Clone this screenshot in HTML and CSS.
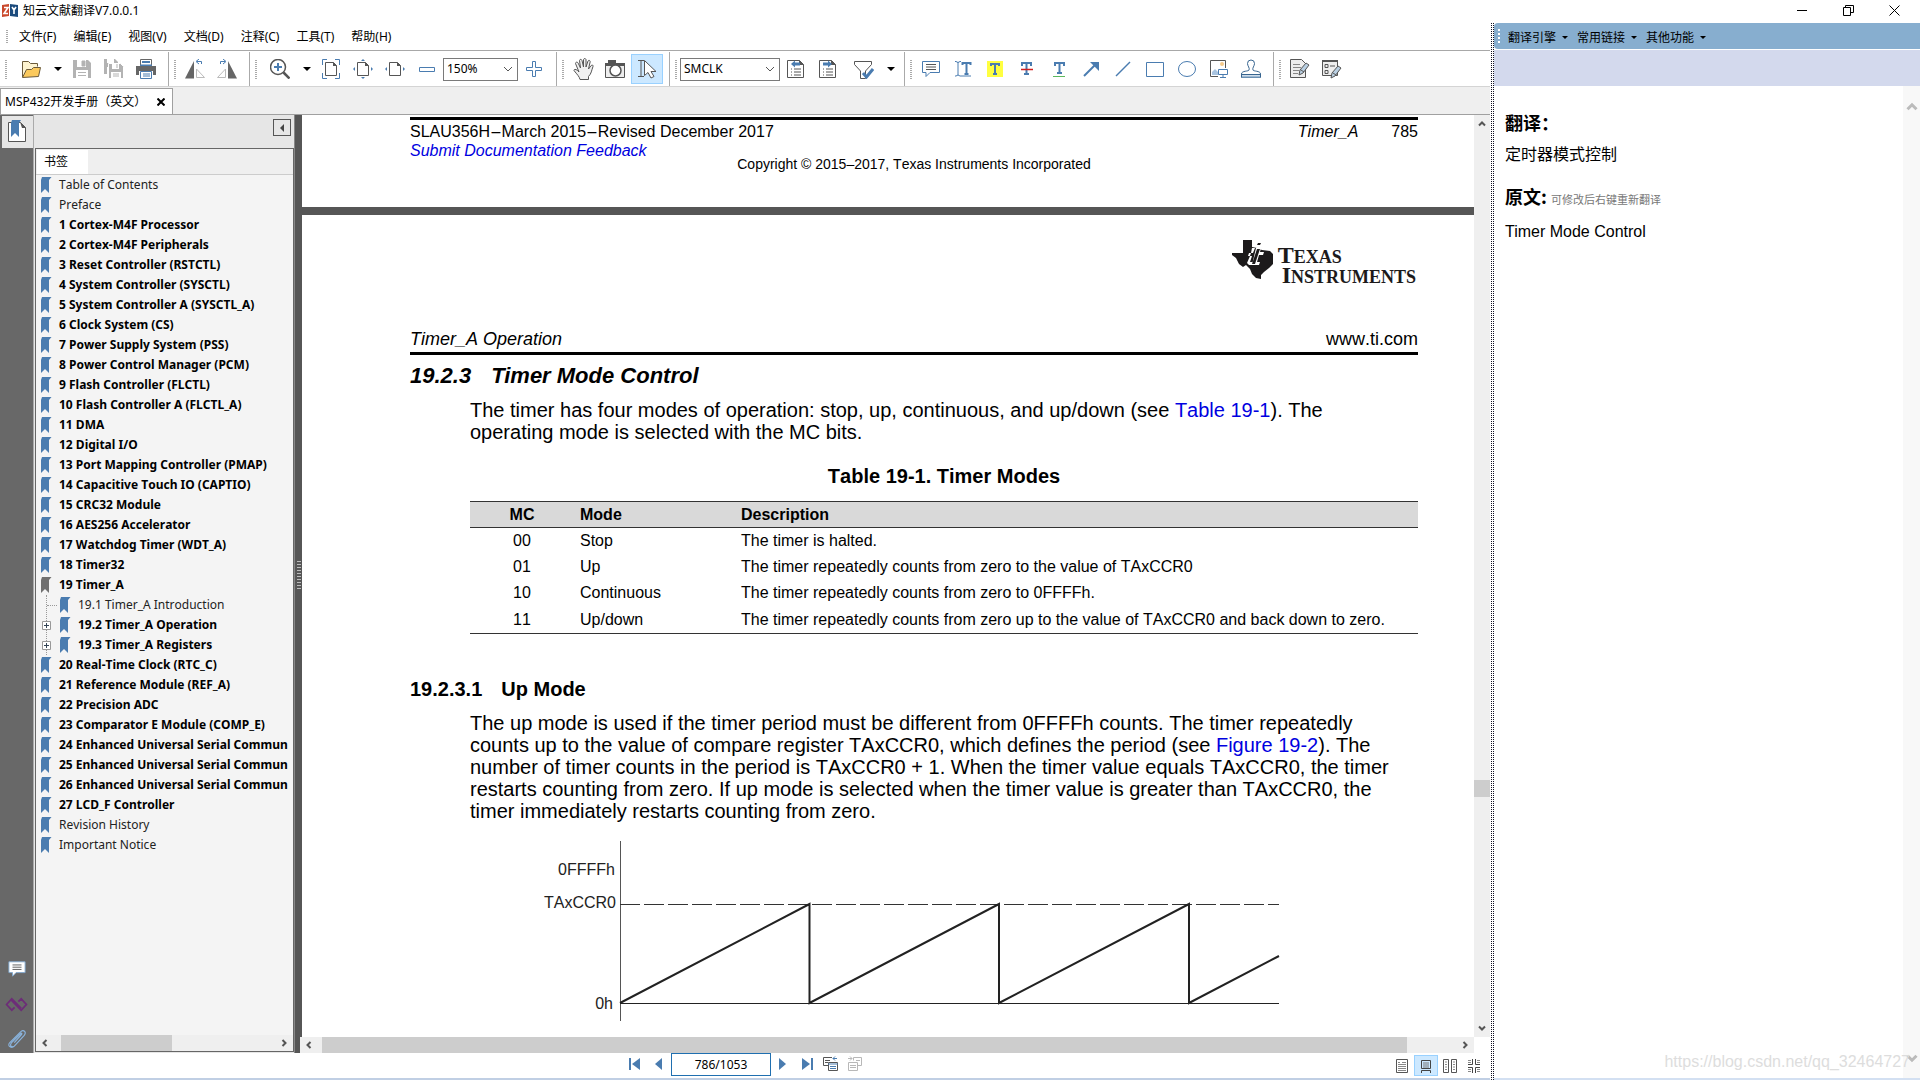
FILE: index.html
```html
<!DOCTYPE html>
<html lang="zh-CN">
<head>
<meta charset="utf-8">
<title>知云文献翻译V7.0.0.1</title>
<link rel="stylesheet" href="styles.css">
</head>
<body>
<svg class="defs" aria-hidden="true">
  <symbol id="mark" viewBox="0 0 12 16"><path d="M2 0h9.500l-2.500 3v13l-4-4-4 4V3z" fill="currentColor"/></symbol>
  <symbol id="down" viewBox="0 0 8 4"><path d="M0 0h8L4 4z" fill="currentColor"/></symbol>
  <symbol id="chev" viewBox="0 0 10 6"><path d="M1 1l4 4 4-4" fill="none" stroke="currentColor"/></symbol>
  <symbol id="sc" viewBox="0 0 8 8"><path d="M5.500 1l-3 3 3 3" fill="none" stroke="currentColor" stroke-width="2"/></symbol>
  <symbol id="page" viewBox="0 0 20 20"><path d="M4.500 3.500h8l3 3v10h-11z" fill="#fff" stroke="#555"/><path d="M12 3l4 4h-4z" fill="#555"/></symbol>
  <symbol id="lines" viewBox="0 0 20 20"><path d="M1.500 1.500h12l4 4v13h-16z" fill="#fff" stroke="#555"/><path d="M13 1l5 5h-5z" fill="#555"/><path d="M5 10h1m2 0h7M5 13h1m2 0h7M5 16h1m2 0h7" stroke="#555"/></symbol>
  <symbol id="pen" viewBox="0 0 12 14"><path d="M1 13l1-5 6-7 3 2-6 8z" fill="#b9cfe2" stroke="#555"/><path d="M3 8l3 2" stroke="#555"/></symbol>
</svg>
<div class="app">
  <header class="titlebar">
    <svg class="logo" viewBox="0 0 16 13"><path d="M0 1l7-1v12l-7 1z" fill="#c9482c"/><path d="M8 0l8 1v12l-8-1z" fill="#1b4a7c"/><path d="M2 3.500h4l-4 6h4M10 3l2 3 2-3M12 6v4" fill="none" stroke="#fff" stroke-width="1.600"/></svg>
    <h1 class="apptitle">知云文献翻译V7.0.0.1</h1>
    <button class="winbtn" aria-label="最小化"><svg viewBox="0 0 11 11"><path d="M0 5.500h10" stroke="#000"/></svg></button>
    <button class="winbtn" aria-label="还原"><svg viewBox="0 0 11 11"><path d="M.5 2.500h7v8h-7zM2.500 2.500v-2h8v7h-3" fill="none" stroke="#000"/></svg></button>
    <button class="winbtn" aria-label="关闭"><svg viewBox="0 0 11 11"><path d="M.5.5l10 10M10.500.5l-10 10" stroke="#000"/></svg></button>
  </header>
  <div class="body">
    <main class="reader">
      <nav class="menubar">
        <button>文件(F)</button><button>编辑(E)</button><button>视图(V)</button><button>文档(D)</button><button>注释(C)</button><button>工具(T)</button><button>帮助(H)</button>
      </nav>
      <div class="toolbar">
        <div class="group wide">
          <button class="tool" aria-label="打开"><svg viewBox="0 0 20 20"><path d="M1.500 18V2.500h6l2 2h7v3" fill="#fdf3d0" stroke="#6b5a3a"/><path d="M1.500 18.500l4-8h5l2-2h7l-2 9z" fill="#fbc95c" stroke="#6b5a3a"/></svg></button>
          <button class="drop" aria-label="最近文件"><svg viewBox="0 0 8 4"><use href="#down"/></svg></button>
          <button class="tool" aria-label="保存"><svg viewBox="0 0 20 20"><path d="M1 1h15l3 3v15H1z" fill="#b3b3b3"/><path d="M5 1h9v7H5zM4 11h12v8H4z" fill="#fff"/><path d="M10 2h3v5h-3zM6 13.500h8M6 16.500h8" fill="#b3b3b3" stroke="#b3b3b3"/></svg></button>
          <button class="tool" aria-label="全部保存"><svg viewBox="0 0 20 20"><path d="M0 0h11l3 3v12H0z" fill="#b3b3b3"/><path d="M3 0h7v4H3zM3 8h2v7H3z" fill="#fff"/><path d="M4.500 4.500h12l3 3v12h-15z" fill="#b3b3b3" stroke="#fff"/><path d="M8 5h7v5H8zM7 13h10v6H7z" fill="#fff"/><path d="M13 5v4M9 15h6M9 17h6" stroke="#b3b3b3"/></svg></button>
          <button class="tool" aria-label="打印"><svg viewBox="0 0 20 20"><path d="M4.500 6V.5h11V6" fill="#fff" stroke="#666"/><path d="M6 3h8M4 6.500h12" stroke="#4a7cb0" stroke-width="2"/><path d="M0 7h20v9h-3v-4H3v4H0z" fill="#666"/><path d="M4.500 12.500h11v7h-11z" fill="#fff" stroke="#4a7cb0"/><path d="M7 15h7M7 17h7" stroke="#4a7cb0"/></svg></button>
        </div>
        <div class="group">
          <button class="tool" aria-label="向左旋转"><svg viewBox="0 0 20 20"><path d="M9 2v17.500H0z" fill="#666"/><path d="M11.500 10v8.500h8z" fill="none" stroke="#bbb"/><path d="M16.500 5V2.500H12M14 0l-3 2.500L14 5" fill="none" stroke="#4a7cb0"/></svg></button>
          <button class="tool" aria-label="向右旋转"><svg viewBox="0 0 20 20"><path d="M11 2v17.500h9z" fill="#666"/><path d="M8.500 10v8.500h-8z" fill="none" stroke="#bbb"/><path d="M3.500 5V2.500H8M6 0l3 2.500L6 5" fill="none" stroke="#4a7cb0"/></svg></button>
        </div>
        <div class="group wide">
          <button class="tool" aria-label="放大工具"><svg viewBox="0 0 20 20"><circle cx="8" cy="8" r="7.500" fill="#fff" stroke="#555" stroke-width="1.500"/><path d="M8 4v8M4 8h8" stroke="#4a7cb0" stroke-width="2"/><path d="M13.500 13.500l6 6" stroke="#555" stroke-width="2.500"/></svg></button>
          <button class="drop" aria-label="缩放选项"><svg viewBox="0 0 8 4"><use href="#down"/></svg></button>
          <button class="tool" aria-label="实际大小"><svg viewBox="0 0 20 20"><use href="#page"/><path d="M1.500 6V.5H6M14 .5h4.500V6M1.500 14v5.500H6M14 19.500h4.500V14" fill="none" stroke="#4a7cb0"/></svg></button>
          <button class="tool" aria-label="适合页面"><svg viewBox="0 0 20 20"><use href="#page"/><path d="M10 0l2 2H8zM10 20l2-2H8zM0 10l2-2v4zM20 10l-2-2v4z" fill="#4a7cb0"/></svg></button>
          <button class="tool" aria-label="适合宽度"><svg viewBox="0 0 20 20"><use href="#page"/><path d="M0 10l2-2v4zM20 10l-2-2v4z" fill="#4a7cb0"/></svg></button>
          <button class="tool" aria-label="缩小"><svg viewBox="0 0 20 20"><path d="M2.500 8.500h15v4h-15z" fill="#fff" stroke="#4a7cb0"/></svg></button>
          <div class="combo zoomcombo"><select aria-label="缩放比例"><option>150%</option></select><svg viewBox="0 0 10 6"><use href="#chev"/></svg></div>
          <button class="tool" aria-label="放大"><svg viewBox="0 0 20 20"><path d="M8.500 2.500h3v6h6v3h-6v6h-3v-6h-6v-3h6z" fill="#fff" stroke="#4a7cb0"/></svg></button>
        </div>
        <div class="group">
          <button class="tool" aria-label="手形工具"><svg class="hand" viewBox="0 0 21 22"><path d="M7 21.500c-.5-3-3-5-6-9 0-1.500 2-2 5 1.500L2.500 5.500c0-1.500 2-2 2.700-.3L7.500 10 6.500 2.500c.3-1.500 2-1.500 2.500 0L10.500 9V1.500c.5-1.300 2-1.300 2.500 0V9l2-6c.7-1.200 2.200-.7 2.200.7L15.500 11l2.700-3.500c1-1 2.300-.2 1.800 1-1.500 4-1.500 7-4.500 10v3z" fill="#f0f0f0" stroke="#555"/></svg></button>
          <button class="tool" aria-label="快照"><svg viewBox="0 0 20 20"><path d="M.5 4.500h19v14H.5z" fill="#eee" stroke="#555"/><path d="M0 4h20v3H0zM3 1h8v3H3z" fill="#555"/><circle cx="10.500" cy="11.500" r="5.500" fill="#fff" stroke="#555" stroke-width="1.500"/></svg></button>
          <button class="tool selected" aria-label="选择工具" aria-pressed="true"><svg viewBox="0 0 20 20"><path d="M1 1.500h6M4 2v15M1 17.500h6" stroke="#555" fill="none"/><path d="M7.500 1.500v15l3.500-3 3 5.500 3-1.500-3-5h5z" fill="#fff" stroke="#555"/></svg></button>
        </div>
        <div class="group">
          <div class="combo findcombo"><select aria-label="查找"><option>SMCLK</option></select><svg viewBox="0 0 10 6"><use href="#chev"/></svg></div>
          <button class="tool" aria-label="查找上一个"><svg viewBox="0 0 20 20"><use href="#lines"/><path d="M14 5H8" stroke="#4a7cb0" stroke-width="3"/><path d="M9 1.500v7L5 5z" fill="#4a7cb0"/></svg></button>
          <button class="tool" aria-label="查找下一个"><svg viewBox="0 0 20 20"><use href="#lines"/><path d="M5 5h6" stroke="#4a7cb0" stroke-width="3"/><path d="M10 1.500v7L14 5z" fill="#4a7cb0"/></svg></button>
          <button class="tool filter" aria-label="查找选项"><svg viewBox="0 0 20 20"><path d="M.5 2.500h17v3L11.500 12v7.500h-5V12L.5 5.500z" fill="#fff" stroke="#555"/><path d="M9 14l3.500 4L19 10" fill="none" stroke="#4a7cb0" stroke-width="3"/></svg></button>
          <button class="drop" aria-label="更多查找选项"><svg viewBox="0 0 8 4"><use href="#down"/></svg></button>
        </div>
        <div class="group">
          <button class="tool" aria-label="注释"><svg viewBox="0 0 20 20"><path d="M1.500 2.500h17v11H9l-4 4v-4H1.500z" fill="#fff" stroke="#4a7cb0"/><path d="M5 5.500h10M5 8h10M5 10.500h10" stroke="#555"/></svg></button>
          <button class="tool" aria-label="文本编辑"><svg viewBox="0 0 20 20"><path d="M2 2.500h1l2 1 2-1h1M5 3v13M2 17h1l2-1 2 1h11" fill="none" stroke="#4a7cb0"/><path d="M9.500 6V4h8v2M13.500 4v11M11.500 15h4" fill="none" stroke="#4a7cb0" stroke-width="2"/></svg></button>
          <button class="tool" aria-label="高亮"><svg viewBox="0 0 20 20"><path d="M2 2h16v16H2z" fill="#ffff40"/><path d="M6 7V5h8v2M10 5v10M8 15h4" fill="none" stroke="#4a7cb0" stroke-width="2"/></svg></button>
          <button class="tool" aria-label="删除线"><svg viewBox="0 0 20 20"><path d="M5 7V4h9v3M9.500 4v11M7 15h5" fill="none" stroke="#4a7cb0" stroke-width="2"/><path d="M4 10.500h12" stroke="#d02020" stroke-width="1.500"/></svg></button>
          <button class="tool" aria-label="下划线"><svg viewBox="0 0 20 20"><path d="M6 7V4h9v3M10.500 4v10M8 14h5" fill="none" stroke="#4a7cb0" stroke-width="2"/><path d="M4 17.500h12" stroke="#5cb85c"/></svg></button>
          <button class="tool" aria-label="箭头"><svg viewBox="0 0 20 20"><path d="M3 17L14 6" stroke="#4a7cb0" stroke-width="2"/><path d="M9 3h9v9z" fill="#4a7cb0"/></svg></button>
          <button class="tool" aria-label="直线"><svg viewBox="0 0 20 20"><path d="M3 17L17 3" stroke="#4a7cb0" stroke-width="1.500"/></svg></button>
          <button class="tool" aria-label="矩形"><svg viewBox="0 0 20 20"><path d="M1.500 3.500h17v14h-17z" fill="none" stroke="#4a7cb0"/></svg></button>
          <button class="tool" aria-label="椭圆"><svg viewBox="0 0 20 20"><ellipse cx="10" cy="10" rx="8.500" ry="7.500" fill="none" stroke="#4a7cb0"/></svg></button>
          <button class="tool" aria-label="图片"><svg viewBox="0 0 20 20"><path d="M9 17.500H1.500v-16h15V9" fill="none" stroke="#555"/><circle cx="13" cy="5" r="2" fill="#f5c98a"/><path d="M3 16v-3l3-3 3 3v3z" fill="#a9c4e0"/><path d="M9.500 10.500h9v5h-9zM14 16v2.500M11 18.500h6" fill="#fff" stroke="#4a7cb0"/></svg></button>
          <button class="tool" aria-label="图章"><svg viewBox="0 0 20 20"><path d="M8 11c1-2-1.500-4-1.500-6.500a3.500 3.500 0 0 1 7 0C13.500 7 11 9 12 11c0 1.500 7.500.5 7.500 4v3.500H.5V15C.5 11.500 8 12.500 8 11z" fill="#fff" stroke="#36648f"/><path d="M1 15.500h18" stroke="#36648f"/><path d="M1 17.500h18" stroke="#9db9d3" stroke-width="2"/></svg></button>
        </div>
        <div class="group last">
          <button class="tool" aria-label="编辑内容"><svg viewBox="0 0 20 20"><path d="M.5.5h11l4 4v14H.5z" fill="#eee" stroke="#555"/><path d="M3 5.500h7M3 8.500h8M3 11.500h6M3 14.500h5" stroke="#888"/><use href="#pen" x="8" y="3" width="12" height="14"/></svg></button>
          <button class="tool" aria-label="编辑表单"><svg viewBox="0 0 20 20"><path d="M.5 1.500h15v15H.5z" fill="#eee" stroke="#555"/><path d="M0 1h16v2H0z" fill="#555"/><path d="M3 5.500h3v3H3zM3 11.500h3v3H3zM8 7h5" fill="none" stroke="#555"/><use href="#pen" x="8" y="6" width="12" height="14"/></svg></button>
        </div>
      </div>
      <div class="tabs">
        <div class="tab"><span>MSP432开发手册（英文）</span><button aria-label="关闭标签"><svg viewBox="0 0 8 8"><path d="M.5.5l7 7M7.500.5l-7 7" stroke="#000" stroke-width="2"/></svg></button></div>
      </div>
      <div class="work">
        <div class="rail">
          <button class="railtab" aria-label="书签面板"><svg viewBox="0 0 20 22"><path d="M1.500 2.500h12l5 5v14h-17z" fill="#fff" stroke="#555"/><path d="M13 2l6 6h-4z" fill="#555"/><path d="M5 0h9l-2 3v14l-4-4-4 4V3z" fill="#4a7cb0"/></svg></button>
          <button class="railbtn" aria-label="注释面板"><svg viewBox="0 0 20 18"><path d="M1 1h18v12H9l-4 4v-4H1z" fill="#fff" stroke="#7fa8d0"/><path d="M5 4.500h10M5 7h10M5 9.500h10" stroke="#555"/></svg></button>
          <button class="railbtn" aria-label="链接面板"><svg class="link" viewBox="0 0 24 18"><path d="M14 12L7 5M10 6L7 3l-5.500 6L7 15l3-3M10 6l7 7M14 12l3 3 5.500-6L17 3l-3 3" fill="none" stroke="#6d2c78" stroke-width="1.800"/></svg></button>
          <button class="railbtn" aria-label="附件面板"><svg viewBox="0 0 20 20"><path d="M7 14l8-9c1-1 0-2-1-1L4 14c-3 4 1 6 3 4L18 6c3-4-1-7-4-4L2 14c-3 3 1 7 4 4" fill="none" stroke="#8ab4de" stroke-width="1.300"/></svg></button>
        </div>
        <aside class="panel">
          <div class="panelhead"><button aria-label="收起面板"><svg viewBox="0 0 4 8"><path d="M4 0v8L0 4z" fill="#444"/></svg></button></div>
          <div class="panelbox">
            <div class="paneltabs"><button>书签</button></div>
            <ul class="tree">
              <li><a href="#"><svg><use href="#mark"/></svg>Table of Contents</a></li>
              <li><a href="#"><svg><use href="#mark"/></svg>Preface</a></li>
              <li><a class="b" href="#"><svg><use href="#mark"/></svg>1 Cortex-M4F Processor</a></li>
              <li><a class="b" href="#"><svg><use href="#mark"/></svg>2 Cortex-M4F Peripherals</a></li>
              <li><a class="b" href="#"><svg><use href="#mark"/></svg>3 Reset Controller (RSTCTL)</a></li>
              <li><a class="b" href="#"><svg><use href="#mark"/></svg>4 System Controller (SYSCTL)</a></li>
              <li><a class="b" href="#"><svg><use href="#mark"/></svg>5 System Controller A (SYSCTL_A)</a></li>
              <li><a class="b" href="#"><svg><use href="#mark"/></svg>6 Clock System (CS)</a></li>
              <li><a class="b" href="#"><svg><use href="#mark"/></svg>7 Power Supply System (PSS)</a></li>
              <li><a class="b" href="#"><svg><use href="#mark"/></svg>8 Power Control Manager (PCM)</a></li>
              <li><a class="b" href="#"><svg><use href="#mark"/></svg>9 Flash Controller (FLCTL)</a></li>
              <li><a class="b" href="#"><svg><use href="#mark"/></svg>10 Flash Controller A (FLCTL_A)</a></li>
              <li><a class="b" href="#"><svg><use href="#mark"/></svg>11 DMA</a></li>
              <li><a class="b" href="#"><svg><use href="#mark"/></svg>12 Digital I/O</a></li>
              <li><a class="b" href="#"><svg><use href="#mark"/></svg>13 Port Mapping Controller (PMAP)</a></li>
              <li><a class="b" href="#"><svg><use href="#mark"/></svg>14 Capacitive Touch IO (CAPTIO)</a></li>
              <li><a class="b" href="#"><svg><use href="#mark"/></svg>15 CRC32 Module</a></li>
              <li><a class="b" href="#"><svg><use href="#mark"/></svg>16 AES256 Accelerator</a></li>
              <li><a class="b" href="#"><svg><use href="#mark"/></svg>17 Watchdog Timer (WDT_A)</a></li>
              <li><a class="b" href="#"><svg><use href="#mark"/></svg>18 Timer32</a></li>
              <li><a class="b current" href="#"><svg><use href="#mark"/></svg>19 Timer_A</a>
                <ul class="subtree">
                  <li><i class="dots"></i><a href="#"><svg><use href="#mark"/></svg>19.1 Timer_A Introduction</a></li>
                  <li><button class="plus" aria-label="展开 19.2"><svg viewBox="0 0 9 9"><path d="M.5.5h8v8h-8z" fill="#fff" stroke="#999"/><path d="M2 4.500h5M4.500 2v5" stroke="#345"/></svg></button><a class="b" href="#"><svg><use href="#mark"/></svg>19.2 Timer_A Operation</a></li>
                  <li><button class="plus" aria-label="展开 19.3"><svg viewBox="0 0 9 9"><path d="M.5.5h8v8h-8z" fill="#fff" stroke="#999"/><path d="M2 4.500h5M4.500 2v5" stroke="#345"/></svg></button><a class="b" href="#"><svg><use href="#mark"/></svg>19.3 Timer_A Registers</a></li>
                </ul>
              </li>
              <li><a class="b" href="#"><svg><use href="#mark"/></svg>20 Real-Time Clock (RTC_C)</a></li>
              <li><a class="b" href="#"><svg><use href="#mark"/></svg>21 Reference Module (REF_A)</a></li>
              <li><a class="b" href="#"><svg><use href="#mark"/></svg>22 Precision ADC</a></li>
              <li><a class="b" href="#"><svg><use href="#mark"/></svg>23 Comparator E Module (COMP_E)</a></li>
              <li><a class="b" href="#"><svg><use href="#mark"/></svg>24 Enhanced Universal Serial Commun</a></li>
              <li><a class="b" href="#"><svg><use href="#mark"/></svg>25 Enhanced Universal Serial Commun</a></li>
              <li><a class="b" href="#"><svg><use href="#mark"/></svg>26 Enhanced Universal Serial Commun</a></li>
              <li><a class="b" href="#"><svg><use href="#mark"/></svg>27 LCD_F Controller</a></li>
              <li><a href="#"><svg><use href="#mark"/></svg>Revision History</a></li>
              <li><a href="#"><svg><use href="#mark"/></svg>Important Notice</a></li>
            </ul>
            <div class="hbar"><svg viewBox="0 0 8 8"><use href="#sc"/></svg><div class="track"><i class="thumb tree-thumb"></i></div><svg class="right" viewBox="0 0 8 8"><use href="#sc"/></svg></div>
          </div>
        </aside>
        <div class="gutter"><i></i></div>
        <div class="viewer">
          <div class="viewrow">
            <div class="pages">
              <section class="sheet first">
                <div class="foot">
                  <div><p>SLAU356H&#8202;–&#8202;March 2015&#8202;–&#8202;Revised December 2017</p><p><a class="em" href="#">Submit Documentation Feedback</a></p></div>
                  <p class="pageno"><i>Timer_A</i><span>785</span></p>
                </div>
                <p class="copy">Copyright © 2015–2017, Texas Instruments Incorporated</p>
              </section>
              <section class="sheet second">
                <div class="brand">
                  <svg viewBox="0 0 41 39"><path d="M11 0h9v7l5 1 5 2 8 1 3 3v10l-4 4-5 4-3 3v4l-5-1-4-4-2-5-4-4-3 2-4-3-3-6-4-3v-2h11z" fill="#1c1a1b"/><path d="M20 8h3l-2 5h-2l-1 3h2l-2 6h4l-1 3h-4l-2-2 3-7h-2l1-3h2zM25 2h5l-1 4h-5zM24 8h5l-1 4h4l-1 3h-4l-2 7h3l-1 3h-7z" fill="#fff"/><path d="M26 3h3l-1 2h-3zM25 9h3l-5 15h-3z" fill="#1c1a1b"/></svg>
                  <p>T<small>EXAS</small><br><span>I<small>NSTRUMENTS</small></span></p>
                </div>
                <div class="running"><i>Timer_A Operation</i><span>www.ti.com</span></div>
                <h2><span>19.2.3</span>Timer Mode Control</h2>
                <p class="para">The timer has four modes of operation: stop, up, continuous, and up/down (see <a href="#">Table 19-1</a>). The<br>operating mode is selected with the MC bits.</p>
                <table>
                  <caption>Table 19-1. Timer Modes</caption>
                  <thead><tr><th class="mc">MC</th><th class="mode">Mode</th><th>Description</th></tr></thead>
                  <tbody>
                    <tr><td class="mc">00</td><td>Stop</td><td>The timer is halted.</td></tr>
                    <tr><td class="mc">01</td><td>Up</td><td>The timer repeatedly counts from zero to the value of TAxCCR0</td></tr>
                    <tr><td class="mc">10</td><td>Continuous</td><td>The timer repeatedly counts from zero to 0FFFFh.</td></tr>
                    <tr><td class="mc">11</td><td>Up/down</td><td>The timer repeatedly counts from zero up to the value of TAxCCR0 and back down to zero.</td></tr>
                  </tbody>
                </table>
                <h3><span>19.2.3.1</span>Up Mode</h3>
                <p class="para">The up mode is used if the timer period must be different from 0FFFFh counts. The timer repeatedly<br>counts up to the value of compare register TAxCCR0, which defines the period (see <a href="#">Figure 19-2</a>). The<br>number of timer counts in the period is TAxCCR0 + 1. When the timer value equals TAxCCR0, the timer<br>restarts counting from zero. If up mode is selected when the timer value is greater than TAxCCR0, the<br>timer immediately restarts counting from zero.</p>
                <svg class="figure" viewBox="0 0 740 182" role="img" aria-label="Up mode">
                  <path d="M80.500 0v180" stroke="#555"/>
                  <path d="M80 162.500h659" stroke="#222"/>
                  <path d="M80 63.500h659" stroke="#333" stroke-dasharray="20 4"/>
                  <path d="M80 162L269.500 63v99L459 63v99L649 63v99l90-47" fill="none" stroke="#222" stroke-width="2"/>
                  <g font-family="Liberation Sans, Arial, sans-serif" font-size="16" fill="#222" text-anchor="end"><text x="75" y="34">0FFFFh</text><text x="76" y="67">TAxCCR0</text><text x="73" y="168">0h</text></g>
                </svg>
              </section>
            </div>
            <div class="vbar"><svg class="up" viewBox="0 0 8 8"><use href="#sc"/></svg><div class="vtrack"><i></i></div><svg class="dn" viewBox="0 0 8 8"><use href="#sc"/></svg></div>
          </div>
          <div class="hbar doc"><svg viewBox="0 0 8 8"><use href="#sc"/></svg><div class="track"><i class="thumb doc-thumb"></i></div><svg class="right" viewBox="0 0 8 8"><use href="#sc"/></svg></div>
        </div>
      </div>
      <footer class="status">
        <div></div>
        <div class="pager">
          <button aria-label="第一页"><svg viewBox="0 0 12 14"><path d="M1 1v12" stroke="#4a7cb0" stroke-width="2"/><path d="M11 1v12L3 7z" fill="#4a7cb0"/></svg></button>
          <button aria-label="上一页"><svg viewBox="0 0 12 14"><path d="M9 1v12L2 7z" fill="#4a7cb0"/></svg></button>
          <input aria-label="页码" value="786/1053">
          <button aria-label="下一页"><svg viewBox="0 0 12 14"><path d="M2 1v12l7-6z" fill="#4a7cb0"/></svg></button>
          <button aria-label="最后一页"><svg viewBox="0 0 12 14"><path d="M11 1v12" stroke="#4a7cb0" stroke-width="2"/><path d="M1 1v12l8-6z" fill="#4a7cb0"/></svg></button>
          <button aria-label="后退"><svg class="hist" viewBox="0 0 16 16"><path d="M6 9.500H.5v-8H9M2 4.500h5M2 6.500h3M5.500 6.500h9v8h-9z" fill="none" stroke="#555"/><path d="M5 8h10M7 10.500h6M7 12.500h6M14 2.500h-4M12 .5l-2 2 2 2" fill="none" stroke="#4a7cb0"/></svg></button>
          <button aria-label="前进"><svg class="hist" viewBox="0 0 16 16"><path d="M14.500 1.500h-8v3M14.500 1.500v8H11M1.500 6.500h9v8h-9zM3 9.500h6M3 11.500h6M9 4.500h4M1 2.500h4M3 .5l2 2-2 2" fill="none" stroke="#b8b8b8"/></svg></button>
        </div>
        <div class="views">
          <button aria-label="单页"><svg viewBox="0 0 14 14"><path d="M1.500.5h11v13h-11z" fill="none" stroke="#555"/><path d="M3 3.500h2M7 3.500h4M3 5.500h8M3 7.500h8M3 9.500h8M3 11.500h8" stroke="#888"/></svg></button>
          <button class="selected" aria-label="连续" aria-pressed="true"><svg viewBox="0 0 14 14"><path d="M2.500 1.500h9v8h-9zM2.500 14v-2.500h9V14" fill="none" stroke="#444"/><path d="M4 4h6M4 6h6M4 8h6" stroke="#777"/></svg></button>
          <button aria-label="双页"><svg viewBox="0 0 14 14"><path d="M.5.5h5v13h-5zM8.500.5h5v13h-5z" fill="none" stroke="#555"/><path d="M2 3h2M2 5.500h2M2 8h2M2 10.500h2M10 3h2M10 5.500h2M10 8h2M10 10.500h2" stroke="#888"/></svg></button>
          <button aria-label="双页连续"><svg viewBox="0 0 14 14"><path d="M1 5.500h4.500V0M13 5.500H8.500V0M1 8.500h4.500V14M13 8.500H8.500V14" fill="none" stroke="#444"/><path d="M1 1.500h3M1 3.500h3M10 1.500h3M10 3.500h3M1 10.500h3M1 12.500h3M10 10.500h3M10 12.500h3" stroke="#888"/></svg></button>
        </div>
      </footer>
    </main>
    <div class="splitter"></div>
    <aside class="translate">
      <nav class="tbar"><button>翻译引擎<svg viewBox="0 0 8 4"><use href="#down"/></svg></button><button>常用链接<svg viewBox="0 0 8 4"><use href="#down"/></svg></button><button>其他功能<svg viewBox="0 0 8 4"><use href="#down"/></svg></button></nav>
      <div class="band"></div>
      <div class="trow">
        <div class="result">
          <h2>翻译：</h2>
          <p>定时器模式控制</p>
          <h2>原文: <small>可修改后右键重新翻译</small></h2>
          <p>Timer Mode Control</p>
        </div>
        <div class="tscroll"><svg class="up" viewBox="0 0 8 8"><use href="#sc"/></svg><svg class="dn" viewBox="0 0 8 8"><use href="#sc"/></svg></div>
      </div>
      <span class="watermark">https://blog.csdn.net/qq_32464727</span>
    </aside>
  </div>
</div>
</body>
</html>
```
FILE: styles.css
```css
* { box-sizing: border-box; }
body { margin: 0; background: #fff; color: #000; font: 12px/16px "Noto Sans", "Noto Sans CJK SC", sans-serif; }
button { border: 0; background: none; padding: 0; font: inherit; color: inherit; display: flex; align-items: center; justify-content: center; }
h1, h2, h3, p, ul { margin: 0; padding: 0; font-weight: normal; }
ul { list-style: none; }
svg { display: block; }
.defs { display: none; }

.app { min-height: 100vh; display: flex; flex-direction: column; }
.titlebar { height: 23px; display: flex; align-items: center; padding: 0 3px 2px 2px; }
.logo { width: 16px; height: 13px; margin-right: 5px; }
.apptitle { font-size: 12px; flex: 1; }
.winbtn { width: 46px; height: 20px; }
.winbtn svg { width: 11px; height: 11px; }

.body { flex: 1; display: flex; }
.reader { flex: 1; min-width: 0; display: flex; flex-direction: column; border-bottom: 2px solid #c0cfe4; }

.menubar { height: 28px; display: flex; align-items: center; gap: 17px; padding-left: 19px; border-bottom: 1px solid #a8a8a8;
  background: repeating-linear-gradient(#aaa 0 1px, #fff 1px 2px) 6px 7px / 2px 13px no-repeat; }

.toolbar { height: 36px; display: flex; border-bottom: 1px solid #d4d4d4; }
.group { display: flex; align-items: center; padding: 0 6px 0 10px; border-right: 1px solid #aaa; margin-top: 1px;
  background: repeating-linear-gradient(#aaa 0 1px, #fff 1px 2px) 5px 8px / 2px 20px no-repeat; }
.wide { padding-left: 14px; }
.wide:first-child { padding-left: 15px; }
.last { border-right: 0; }
.tool { width: 32px; height: 30px; }
.tool svg { width: 20px; height: 20px; }
.tool .hand { width: 21px; height: 22px; }
.drop { width: 19px; height: 30px; padding-left: 2px; }
.drop svg { width: 8px; height: 4px; }
.filter { margin-left: 4px; }
.filter + .drop { margin-right: -1px; }
.selected { background: #cce8ff; border: 1px solid #99d1ff; }
.combo { display: grid; align-items: center; height: 23px; border: 1px solid #7a7a7a; }
.combo > * { grid-area: 1 / 1; }
.combo select { appearance: none; width: 100%; height: 21px; border: 0; background: #fff; padding: 0 3px; font: 12px/20px "Noto Sans", sans-serif; color: #000; }
.combo svg { justify-self: end; width: 10px; height: 6px; margin-right: 4px; color: #555; pointer-events: none; }
.zoomcombo { width: 75px; }
.findcombo { width: 100px; }

.tabs { height: 28px; background: #efefef; border-bottom: 1px solid #a0a0a0; display: flex; padding-top: 1px; }
.tab { width: 173px; display: flex; align-items: center; justify-content: space-between; padding: 0 7px 0 4px; background: #fff; border: 1px solid #a0a0a0; border-bottom: 0; white-space: nowrap; }
.tab svg { width: 8px; height: 8px; }

.work { flex: 1; display: flex; min-height: 0; }
.rail { width: 34px; background: #686868; border-right: 1px solid #aaa; display: flex; flex-direction: column; align-items: center; padding: 1px 0 0 2px; }
.railtab { width: 31px; height: 32px; background: #e6e6e6; margin-bottom: auto; padding: 0 2px 2px 0; }
.railtab svg { width: 20px; height: 22px; }
.railbtn { height: 35px; width: 30px; padding: 7px 2px 0 0; }
.railbtn svg { width: 18px; height: 18px; }
.railbtn .link { width: 23px; height: 17px; }

.panel { width: 261px; display: flex; flex-direction: column; background: #e6e6e6; border-right: 1px solid #888; }
.panelhead { height: 33px; display: flex; justify-content: flex-end; align-items: center; padding: 0 3px 8px 0; }
.panelhead button { width: 18px; height: 17px; border: 1px solid #555; }
.panelhead svg { width: 4px; height: 8px; }
.panelbox { flex: 1; display: flex; flex-direction: column; border: 1px solid #666; margin: 0 0 1px 1px; background: #f4f4f4; min-height: 0; }
.paneltabs { height: 26px; background: #efefef; border-bottom: 1px solid #ccc; display: flex; padding: 1px 0 0 1px; }
.paneltabs button { width: 51px; background: #fff; padding-right: 13px; }
.tree { flex: 1; overflow: hidden; white-space: nowrap; padding-left: 4px; font-kerning: none; }
.tree li { line-height: 20px; }
.tree a { color: #222; text-decoration: none; display: flex; align-items: center; height: 20px; }
.tree a svg { width: 12px; height: 16px; margin-right: 7px; color: #4a7cb0; flex: none; }
.tree .b { font-weight: bold; color: #000; }
.tree .current svg { color: #707070; }
.subtree { border-left: 1px dotted #999; margin-left: 6px; }
.subtree li { display: flex; align-items: center; }
.subtree .dots { width: 10px; height: 1px; border-top: 1px dotted #999; margin-right: 2px; }
.plus { width: 9px; height: 9px; margin: 0 8px 0 -5px; }
.plus svg { width: 9px; height: 9px; }

.hbar { height: 16px; display: flex; align-items: center; background: #efefef; padding: 0 5px; }
.hbar svg { width: 8px; height: 8px; color: #555; }
.right { transform: scaleX(-1); }
.track { flex: 1; align-self: stretch; padding: 0 9px 0 12px; }
.thumb { display: block; height: 100%; background: #cdcdcd; }
.tree-thumb { width: 53%; }
.doc-thumb { width: 96%; }
.doc { margin: 0 16px 0 -2px; }
.doc .track { padding-left: 9px; }

.gutter { width: 7px; background: #565656; display: flex; align-items: center; justify-content: center; padding-bottom: 16px; }
.gutter i { width: 4px; height: 30px; background: repeating-linear-gradient(#bbb 0 1px, #565656 1px 3px); }

.viewer { flex: 1; min-width: 0; display: flex; flex-direction: column; background: #fff; }
.viewrow { flex: 1; display: flex; }
.pages { flex: 1; min-width: 0; background: #565656; display: flex; flex-direction: column; gap: 8px; font-family: "Liberation Sans", Arial, sans-serif; font-kerning: none; }
.pages a { color: #0000e0; text-decoration: none; }
.sheet { background: #fff; padding: 0 56px 0 108px; white-space: nowrap; }
.first { padding-top: 2px; height: 92px; font-size: 16px; line-height: 19px; }
.foot { border-top: 3px solid #000; padding-top: 2px; display: flex; justify-content: space-between; }
.em { font-style: italic; }
.pageno { display: flex; gap: 33px; }
.copy { font-size: 14px; line-height: 16px; text-align: center; margin-top: -4px; }
.second { flex: 1; padding-top: 23px; }
.brand { display: flex; justify-content: flex-end; color: #1c1a1b; padding-right: 2px; }
.brand svg { width: 41px; height: 39px; margin: 2px 5px 0 0; }
.brand p { font: bold 24px/20px "Liberation Serif", "Times New Roman", serif; height: 48px; padding-top: 7px; }
.brand small { font-size: 18px; line-height: 1px; }
.brand span { padding-left: 4px; }
.running { display: flex; justify-content: space-between; font-size: 18px; line-height: 22px; border-bottom: 3px solid #000; margin-top: 42px; padding-bottom: 2px; }
.second h2 { font: italic bold 22px/26px "Liberation Sans", Arial, sans-serif; margin-top: 8px; }
.second h2 span { margin-right: 20px; }
.para { font-size: 20px; line-height: 22px; padding-left: 60px; }
.second h2 + .para { margin-top: 10px; }
table { width: calc(100% - 60px); margin: 21px 0 0 60px; border-collapse: collapse; font-size: 16px; line-height: 18px; border-bottom: 1px solid #333; }
caption { font-size: 20px; line-height: 24px; font-weight: bold; padding-bottom: 13px; }
th { background: #d9d9d9; border-top: 1px solid #333; border-bottom: 1px solid #333; text-align: left; }
th, td { padding: 4px 6px; }
th { padding-bottom: 3px; }
tr:last-child td { padding-top: 5px; }
.mc { width: 104px; text-align: center; }
.mode { width: 161px; }
h3 { font-size: 20px; line-height: 24px; font-weight: bold; margin-top: 43px; }
h3 span { margin-right: 19px; }
h3 + .para { margin-top: 11px; }
.figure { width: 740px; height: 182px; margin: 19px 0 0 130px; }

.vbar { width: 16px; background: #efefef; display: flex; flex-direction: column; align-items: center; padding: 5px 0; }
.vbar svg { width: 8px; height: 8px; color: #555; }
.up { transform: rotate(90deg); }
.dn { transform: rotate(-90deg); }
.vtrack { flex: 1; align-self: stretch; display: flex; flex-direction: column; }
.vtrack::before { content: ""; flex: 72; }
.vtrack::after { content: ""; flex: 25; }
.vtrack i { height: 17px; background: #cdcdcd; }

.status { height: 25px; display: grid; grid-template-columns: 623px 1fr auto; }
.pager { display: flex; align-items: flex-start; }
.pager button { width: 24px; height: 22px; }
.pager svg { width: 12px; height: 14px; }
.pager .hist { width: 16px; height: 16px; }
.pager input { width: 100px; height: 23px; border: 1px solid #1f6fb0; text-align: center; font: 12px/20px "Noto Sans", sans-serif; padding: 0; }
.views { display: flex; padding-right: 4px; align-items: center; }
.views button { width: 24px; height: 21px; }
.views svg { width: 14px; height: 14px; }

.splitter { width: 4px; background: conic-gradient(#112 0 25%, #fff 0) 0 0 / 2px 2px; }

.translate { width: 426px; position: relative; display: flex; flex-direction: column; font-family: "Noto Sans CJK SC", sans-serif; border-bottom: 2px solid #d3e0f2; }
.tbar { height: 26px; background: #87aecf; border-radius: 4px 0 0 4px; display: flex; align-items: center; gap: 9px; padding: 2px 0 0 14px;
  background: repeating-linear-gradient(#fff 0 2px, #87aecf 2px 4px) 4px 6px / 2px 14px no-repeat #87aecf; }
.tbar button { gap: 6px; }
.tbar svg { width: 6px; height: 3px; }
.band { height: 36px; margin-top: 1px; background: #d3d9ed; }
.trow { flex: 1; display: flex; }
.result { flex: 1; padding: 23px 0 0 11px; }
.result h2 { font-size: 18px; line-height: 26px; font-weight: bold; }
.result p { font-size: 16px; line-height: 24px; margin: 8px 0 16px; font-family: "Liberation Sans", "Noto Sans CJK SC", sans-serif; }
.result small { font-size: 11px; font-weight: normal; color: #777; }
.tscroll { width: 17px; background: #f8f8f8; display: flex; flex-direction: column; justify-content: space-between; align-items: center; padding: 15px 0 14px; color: #bbb; }
.tscroll svg { width: 12px; height: 12px; }
.watermark { position: absolute; right: 10px; bottom: 6px; font: 16px/20px "Liberation Sans", Arial, sans-serif; color: #ddd; }
```
